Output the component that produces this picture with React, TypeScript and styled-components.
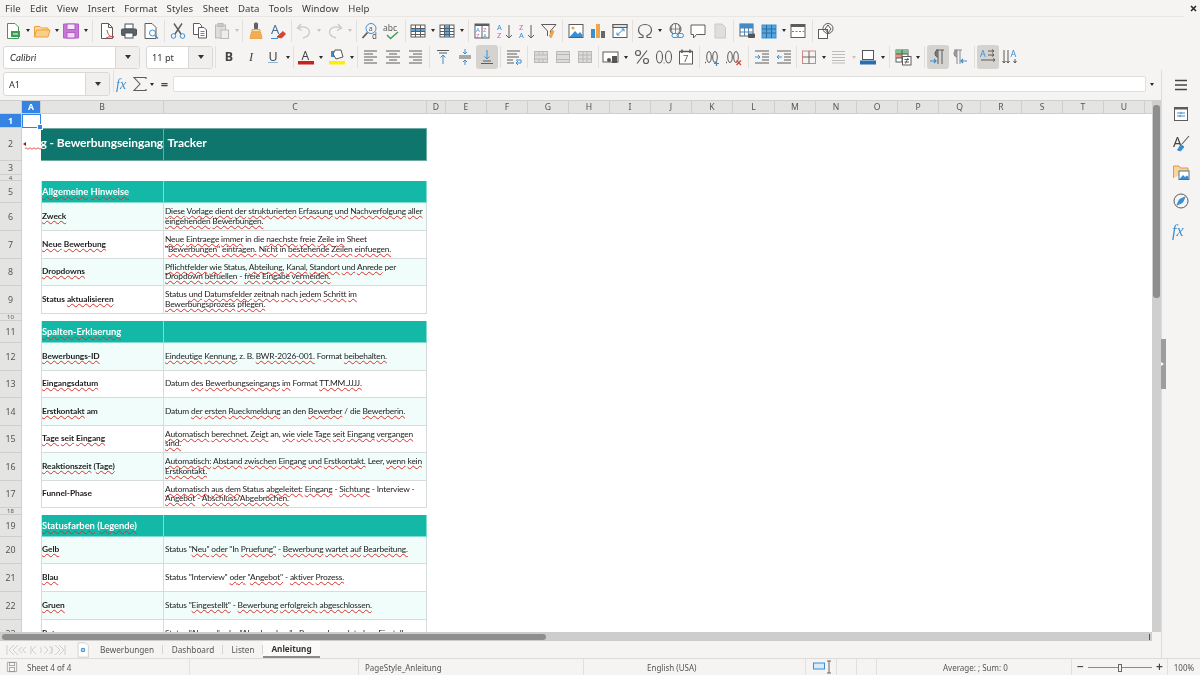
import React from "react";
import styled, { createGlobalStyle } from "styled-components";

const Global = createGlobalStyle`
  html, body { margin: 0; padding: 0; background: #f5f4f2; }
  #root { width: 1200px; height: 675px; overflow: hidden; }
`;

const Page = styled.div`
  width: 1200px; height: 675px; display: flex; flex-direction: column; overflow: hidden;
  background: #f5f4f2; color: #3a3a3a; font-family: "Noto Sans", sans-serif; font-size: 9.6px;
  filter: blur(.3px);
`;
const TopRow = styled.div`height: 17px; display: flex; flex: none;`;
const MenuBar = styled.div`
  flex: 1; display: flex; align-items: center; padding-left: 5px; gap: 9.3px;
  border-bottom: 1px solid #e9e7e4;
`;
const MenuItem = styled.span`font-size: 9.6px; color: #3c3c3c; letter-spacing: .1px;`;
const CloseBtn = styled.div`width: 16px; flex: none; display: flex; align-items: center; justify-content: center; padding-left: 2px; box-sizing: border-box;`;
const Toolbar = styled.div<{ $h: number; $pad: number }>`
  height: ${p => p.$h}px; display: flex; align-items: center; padding-left: ${p => p.$pad}px; flex: none;
`;
const Btn = styled.div<{ $on?: boolean }>`
  width: 22px; height: 24px; flex: none; display: flex; align-items: center; justify-content: center;
  border-radius: 3px; background: ${p => (p.$on ? "#d5d3d0" : "transparent")};
`;
const DropBox = styled.div<{ $dim?: boolean }>`
  width: 7px; height: 24px; flex: none; display: flex; align-items: center; justify-content: center;
  &::after { content: ""; border-left: 2.5px solid transparent; border-right: 2.5px solid transparent;
    border-top: 3px solid ${p => (p.$dim ? "#c4c4c4" : "#2a2a2a")}; }
`;
const Sep = styled.div<{ $w: number }>`
  width: ${p => p.$w}px; height: 22px; flex: none; display: flex; justify-content: center;
  &::after { content: ""; width: 1px; background: #e2e0dd; }
`;
const Gap = styled.div<{ $w: number }>`width: ${p => p.$w}px; flex: none;`;
const Combo = styled.div<{ $w: number; $h?: number; $ml?: number }>`
  width: ${p => p.$w}px; height: ${p => p.$h ?? 23}px; flex: none; display: flex; box-sizing: border-box;
  margin-left: ${p => p.$ml ?? 0}px; border: 1px solid #dad8d5; border-radius: 3px; background: #fff; overflow: hidden;
`;
const ComboText = styled.div<{ $it?: boolean }>`
  flex: 1; display: flex; align-items: center; padding-left: ${p => (p.$it ? 6 : 5)}px; font-size: ${p => (p.$it ? 9.8 : 9.2)}px; color: #333;
  font-style: ${p => (p.$it ? "italic" : "normal")};
  font-family: ${p => (p.$it ? `"Lato", sans-serif` : `"Noto Sans", sans-serif`)};
`;
const ComboArrow = styled.div`
  width: 23px; flex: none; display: flex; align-items: center; justify-content: center; background: #f0efed;
  border-left: 1px solid #dad8d5;
  &::after { content: ""; border-left: 3.5px solid transparent; border-right: 3.5px solid transparent; border-top: 4px solid #333; }
`;
const Letter = styled.span<{ $kind: "b" | "i" | "u" }>`
  font-family: ${p => (p.$kind === "i" ? `"Liberation Serif", serif` : `"Noto Sans", sans-serif`)};
  font-weight: ${p => (p.$kind === "b" ? 700 : 400)};
  font-style: ${p => (p.$kind === "i" ? "italic" : "normal")};
  font-size: 12.5px; color: #444; line-height: 14px;
  ${p => p.$kind === "u" && "border-bottom: 1.5px solid #8fb7dc; line-height: 11px;"}
`;

const Main = styled.div`flex: 1; display: flex; min-height: 0;`;
const LeftPane = styled.div`width: 1161px; flex: none; display: flex; flex-direction: column; min-width: 0;`;
const SideBar = styled.div`
  flex: 1; border-left: 1px solid #dedcd9; display: flex; flex-direction: column; align-items: center;
  padding-top: 5px; gap: 9px; position: relative;
`;
const SideBtn = styled.div`width: 20px; height: 20px; display: flex; align-items: center; justify-content: center;`;
const SideHandle = styled.div`
  position: absolute; left: -1px; top: 269px; width: 5px; height: 50px; background: #9d9d9d; display: flex; align-items: center;
  &::after { content: ""; border-left: 3px solid #fff; border-top: 2.5px solid transparent; border-bottom: 2.5px solid transparent; }
`;
const FormulaBar = styled.div`height: 30px; display: flex; align-items: flex-start; padding-left: 3px; flex: none;`;
const NameWrap = styled.div`margin-top: 2px; display: flex;`;
const ToolCell = styled.div<{ $w: number }>`
  width: ${p => p.$w}px; height: 28px; flex: none; display: flex; align-items: center; justify-content: center;
`;
const FormulaInput = styled.div`
  margin-top: 6px; height: 16px; flex: none; width: 973px; background: #fff; border: 1px solid #e2e0dd; border-radius: 2px; box-sizing: border-box;
`;
const EqualSign = styled.span`font-size: 13px; color: #444; font-weight: 600;`;
const SheetWrap = styled.div`flex: 1; display: flex; min-height: 0; background: #fff;`;
const GridArea = styled.div`width: 1152px; flex: none; display: flex; flex-direction: column; position: relative;`;
const ColHeader = styled.div`
  height: 14px; display: flex; flex: none; background: #e4e4e3; box-sizing: border-box;
  border-top: 1px solid #cfcfcf; border-bottom: 1px solid #cfcfcf;
`;
const ColCell = styled.div<{ $w: number; $on?: boolean }>`
  width: ${p => p.$w}px; flex: none; box-sizing: border-box; display: flex; align-items: center; justify-content: center;
  font-size: 8.6px; color: ${p => (p.$on ? "#fff" : "#555")}; font-weight: ${p => (p.$on ? 700 : 400)};
  background: ${p => (p.$on ? "#3584e4" : "transparent")}; border-right: 1px solid #cfcfcf;
`;
const Body = styled.div`flex: 1; overflow: hidden; position: relative; background: #fff;`;
const Row = styled.div<{ $h: number }>`
  height: ${p => p.$h}px; display: grid; grid-template-columns: 22px 19px 123px 263px; box-sizing: border-box;
`;
const RowHead = styled.div<{ $on?: boolean; $tiny?: boolean }>`
  display: flex; align-items: center; justify-content: center; box-sizing: border-box; overflow: hidden;
  font-size: ${p => (p.$tiny ? 6 : 8.8)}px; line-height: ${p => (p.$tiny ? 6 : 10)}px; color: ${p => (p.$on ? "#fff" : "#555")}; font-weight: ${p => (p.$on ? 700 : 400)};
  background: ${p => (p.$on ? "#3584e4" : "#e4e4e3")}; border-bottom: 1px solid #cfcfcf; border-right: 1px solid #cfcfcf;
`;
const Cell = styled.div<{ $kind?: "title" | "section" | "tint" | "plain" | "none"; $strong?: boolean; $right?: boolean }>`
  box-sizing: border-box; display: flex; flex-direction: column; justify-content: center; overflow: hidden; padding-left: 1px;
  font-family: "Lato", "Liberation Sans", sans-serif; font-size: 8.4px; line-height: 9.4px; color: #1c1c1c;
  white-space: nowrap; letter-spacing: ${p => (p.$strong ? "-.06px" : "-.18px")};
  font-weight: ${p => (p.$strong ? 700 : 400)};
  ${p => p.$kind === "title" && `background: #0f766e; color: #fff; font-size: 12px; font-weight: 700; line-height: 14px; padding-bottom: 3px; letter-spacing: 0; border: 1px solid #6ea9a3; border-width: 1px 1px 1px 0;`}
  ${p => p.$kind === "section" && `background: #14b8a6; color: #fff; font-size: 9.4px; letter-spacing: -.03px; font-weight: 700; border-right: 1px solid #7fdcd1; border-bottom: 1px solid #7fdcd1;`}
  ${p => p.$kind === "tint" && `background: #f0fdfa; border-right: 1px solid #d6dcdb; border-bottom: 1px solid #d6dcdb;`}
  ${p => p.$kind === "plain" && `background: #fff; border-right: 1px solid #d6dcdb; border-bottom: 1px solid #d6dcdb;`}
  ${p => p.$right && "align-items: flex-end; padding-right: 0; letter-spacing: -.12px;"}
`;
const FirstCell = styled(Cell)`border-left: 1px solid #d6dcdb; padding-left: 0;`;
const Word = styled.span`text-decoration: underline wavy #d8322a 0.7px; text-underline-offset: 0.5px; text-decoration-skip-ink: none;`;
const Line = styled.span`display: block;`;
const Cursor = styled.div`
  position: absolute; left: 22px; top: 0; width: 19px; height: 14px; box-sizing: border-box; border: 1.5px solid #3584e4;
  &::after { content: ""; position: absolute; right: -2.5px; bottom: -2.5px; width: 4px; height: 4px; background: #3584e4; border: .5px solid #fff; }
`;
const OverflowMark = styled.div`
  position: absolute; left: 23px; top: 28px; border-right: 3px solid #a11; border-top: 2.5px solid transparent; border-bottom: 2.5px solid transparent;
`;
const OverflowWave = styled.div`
  position: absolute; left: 25px; top: 33px; width: 16px; height: 3px; overflow: hidden;
`;
const VScroll = styled.div`width: 9px; flex: none; background: #cfcfcf; padding: 5px 1px 0; box-sizing: border-box;`;
const VThumb = styled.div`height: 193px; background: #8e8e8e; border-radius: 3px;`;
const HScroll = styled.div`height: 9px; flex: none; background: #cdcdcd; padding: 2px 0 1px 2px; box-sizing: border-box; width: 1152px; display: flex; justify-content: space-between;`;
const HThumb = styled.div`width: 544px; background: #8e8e8e; border-radius: 3px;`;
const HEnd = styled.div`width: 1px; background: #555; margin-right: 2px;`;
const Tabs = styled.div`height: 17px; flex: none; display: flex; align-items: stretch; padding-left: 6px;`;
const NavIcons = styled.div`width: 60px; flex: none; display: flex; align-items: center;`;
const AddTab = styled.div`
  margin-left: 8px; width: 21px; flex: none; display: flex; align-items: center; padding-left: 1px; box-sizing: border-box;
`;
const TabItem = styled.div<{ $w: number; $on?: boolean; $last?: boolean; $pr?: number }>`
  width: ${p => p.$w}px; flex: none; display: flex; align-items: center; justify-content: center; position: relative; box-sizing: border-box;
  padding-right: ${p => p.$pr ?? 0}px;
  font-size: 8.2px; color: ${p => (p.$on ? "#333" : "#555")}; font-weight: ${p => (p.$on ? 700 : 400)};
  ${p => p.$on && "border-bottom: 2px solid #8b8b8b; background: #fbfaf9;"}
  ${p => !p.$on && !p.$last && "&::after { content: ''; position: absolute; right: 0; top: 4px; bottom: 4px; width: 1px; background: #d5d3d0; }"}
`;
const StatusBar = styled.div`
  height: 17px; flex: none; display: flex; align-items: stretch; border-top: 1px solid #dedcd9; box-sizing: border-box;
  font-size: 8px; color: #555;
`;
const StatusCell = styled.div<{ $w: number; $center?: boolean; $line?: boolean; $pad?: number }>`
  width: ${p => p.$w}px; flex: none; display: flex; align-items: center; box-sizing: border-box; gap: 4px;
  padding-left: ${p => p.$pad ?? 0}px;
  justify-content: ${p => (p.$center ? "center" : "flex-start")};
  ${p => p.$line && "border-right: 1px solid #e2e0dd;"}
`;
const ZoomTrack = styled.div`
  width: 64px; height: 1px; background: #8a8a8a; position: relative; flex: none;
  &::after { content: ""; position: absolute; left: 30px; top: -3px; width: 2px; height: 6px; background: #f5f4f2; border: 1px solid #666; }
`;
const ZoomSign = styled.span`font-size: 12px; color: #444; font-weight: 600; line-height: 10px;`;

const blue = "#3a8fd3", gray = "#5c5c5c", org = "#eda64a", red = "#d8402f", grn = "#3e9b57";
type P = React.SVGProps<SVGSVGElement>;
const Sv = styled.svg`display: block; flex: none; overflow: visible;`;
const G = ({ c, children, s = 18, ...r }: P & { c?: string; s?: number }) => (
  <Sv width={s} height={s} viewBox="0 0 18 18" fill="none" stroke={c ?? gray} strokeWidth={1} {...r}>{children}</Sv>
);
const T = (p: { x: number; y: number; f?: string; z?: number; children: string; b?: boolean }) => (
  <text x={p.x} y={p.y} fill={p.f ?? gray} stroke="none" fontSize={p.z ?? 8} fontWeight={p.b ? 700 : 400} fontFamily="Noto Sans, sans-serif">{p.children}</text>
);
const lines = (ys: [number, number, number][], c = gray) => ys.map(([y, a, b], i) => <path key={i} d={`M${a} ${y}H${b}`} stroke={c} />);
const tableG = (c: string, hi: React.ReactNode) => (
  <G c={c}><rect x="2" y="3" width="14" height="12" fill="#fff" />{hi}<path d="M2 6.5H16M2 9.5H16M2 12.5H16M6.5 3V15M11.5 3V15" /></G>
);
const grayTable = (inner: React.ReactNode) => <G c="#b8b8b6"><rect x="2.5" y="3.5" width="13" height="11" fill="#dddcda" />{inner}</G>;

const icons: Record<string, React.ReactNode> = {
  close: <Sv width="7" height="7" viewBox="0 0 7 7" fill="none" stroke="#2a2a2a" strokeWidth={1.6}><path d="M1 1L6 6M6 1L1 6" /></Sv>,
  new: <G c={grn}><path d="M3.5 1.5H11L14.5 5V16.5H3.5Z" fill="#fff" /><rect x="7" y="9" width="9" height="6" fill={grn} stroke="none" /><path d="M9 12H14" stroke="#fff" /></G>,
  open: <G c="#e8a13c"><path d="M1.5 15V4.5H7L8.5 6H15V8" fill="#fbd9a0" /><path d="M1.5 15L3.5 8H17L15 15Z" fill="#fbcf87" /></G>,
  save: <G c="#b45fc6"><path d="M1.5 2H16.5V16H1.5Z" fill="#c778d6" /><rect x="5" y="2" width="8" height="5.5" fill="#f7e8fa" /><rect x="5" y="10.5" width="8" height="5.5" fill="#f0d8f5" /></G>,
  pdf: <G c={gray}><path d="M3.5 1.5H10.5L14.5 5.5V16.5H3.5Z" fill="#fff" /><path d="M10.5 1.5V5.5H14.5" /><path d="M9 8C10 13 12 15 16 15C12 14 9 15 7 17" stroke={red} /></G>,
  print: <G c="#4d5358"><rect x="5" y="2" width="8" height="5" fill="#fff" /><rect x="1.5" y="7" width="15" height="6.5" rx="1" fill="#59626a" /><rect x="5" y="11" width="8" height="5" fill="#fff" /></G>,
  preview: <G c={gray}><path d="M3 1.5H10L14 5.5V16.5H3Z" fill="#fff" /><circle cx="10.5" cy="11" r="3" stroke={blue} /><path d="M13 13.5L16 16.5" stroke={blue} strokeWidth={1.5} /></G>,
  cut: <G c={gray}><path d="M5 1.5L12 12M13 1.5L6 12" strokeWidth={1.4} /><circle cx="4.5" cy="14" r="2.3" stroke={blue} /><circle cx="13.5" cy="14" r="2.3" stroke={blue} /></G>,
  copy: <G c={gray}><path d="M2.5 1.5H8.5L10.5 3.5V12.5H2.5Z" fill="#fff" /><path d="M7.5 5.5H13L15.5 8V16H7.5Z" fill="#fff" /><path d="M9.5 9.5H13.5M9.5 11.5H13.5M9.5 13.5H13.5" stroke={blue} /></G>,
  paste: <G c="#b9b9b9"><rect x="2.5" y="3" width="10" height="13" fill="#dcdcda" /><rect x="5" y="1.5" width="5" height="3" fill="#c9c9c9" /><rect x="8" y="8" width="7.5" height="8.5" fill="#eee" /></G>,
  clone: <G c="#5a5a5a"><rect x="7.5" y="1" width="3" height="6" rx="1" fill="#666" /><path d="M5 7.5H13V10H5Z" fill="#f6d9a4" stroke={org} /><path d="M4.5 10H13.5L15 16.5H3Z" fill="#f2ae55" stroke={org} /></G>,
  clear: <G c="#3a6f9f"><T x={2} y={12} z={13} f="#456f93">A</T><path d="M8 15L14 9.5L16.5 12L12.5 16Z" fill={red} stroke={red} /><path d="M2 16.5H9" stroke={blue} /></G>,
  undo: <G c="#c8c8c6" strokeWidth={1.3}><path d="M6 2L2.5 6L7 8.5" /><path d="M3 6C10 3 16 7 14 12C13 14 10 15.5 8 16" /></G>,
  redo: <G c="#c8c8c6" strokeWidth={1.3}><path d="M12 2L15.5 6L11 8.5" /><path d="M15 6C8 3 2 7 4 12C5 14 8 15.5 10 16" /></G>,
  find: <G c={gray}><circle cx="10" cy="6.5" r="5" stroke={blue} /><T x={7.7} y={9} z={7} f={gray}>a</T><path d="M6.5 10.5L1.5 16" strokeWidth={1.8} /><T x={11} y={17} z={8}>d</T></G>,
  spell: <G c={grn}><T x={0} y={9} z={8.5}>abc</T><path d="M4 13L7.5 16.5L15 10" strokeWidth={1.4} /></G>,
  rows: tableG(gray, <rect x="2" y="6.5" width="14" height="3" fill="#58a7e4" stroke="none" />),
  cols: tableG(gray, <rect x="6.5" y="3" width="5" height="12" fill="#58a7e4" stroke="none" />),
  sort: <G c={gray}><rect x="2" y="2" width="14" height="14" fill="#fff" /><path d="M2 3H16" strokeWidth={2} /><path d="M9 4V16" /><T x={3} y={10} z={6} f={blue}>A</T><T x={3} y={16} z={6} f="#c264c9">Z</T><T x={10} y={10} z={6} f="#c264c9">Z</T><T x={10} y={16} z={6} f={blue}>A</T></G>,
  asc: <G c={gray}><T x={1} y={8} z={7.5} f={blue}>A</T><T x={1} y={16} z={7.5} f="#c264c9">Z</T><path d="M13 3V16M10 13L13 16L16 13" /></G>,
  desc: <G c={gray}><T x={1} y={8} z={7.5} f="#c264c9">Z</T><T x={1} y={16} z={7.5} f={blue}>A</T><path d="M13 3V16M10 13L13 16L16 13" /></G>,
  filter: <G c={gray}><path d="M1.5 2.5H16L10.5 9V12" /><path d="M1.5 2.5L7.5 9V14" /><path d="M12 8L14 9.5L11 16L9.5 14Z" fill={org} stroke={org} /></G>,
  image: <G c={gray}><rect x="2" y="2.5" width="14" height="13" fill="#fff" /><circle cx="6" cy="6" r="1.6" fill={org} stroke="none" /><path d="M2.5 15L8 9L11 12L13 10L15.5 13V15Z" fill={blue} stroke="none" /></G>,
  chart: <G c="none"><rect x="2" y="7" width="4" height="9" fill={blue} /><rect x="7" y="2" width="4" height="14" fill={org} /><rect x="12" y="9" width="4" height="7" fill="#666" /></G>,
  pivot: <G c={gray}><rect x="2" y="2.5" width="14" height="13" fill="#fff" /><rect x="2" y="2.5" width="14" height="3" fill="#ddd" /><path d="M6 13L13 7M10.5 7H13V9.5M6 10.5V13H8.5" stroke={blue} /></G>,
  omega: <G c={gray} strokeWidth={1.2}><path d="M2.5 15.5H7V13.5C4.5 12.5 2.5 10.5 2.5 8C2.5 4.5 5.5 2.5 9 2.5S15.5 4.5 15.5 8C15.5 10.5 13.5 12.5 11 13.5V15.5H15.5" /></G>,
  link: <G c={gray}><circle cx="8.5" cy="7" r="5.5" /><path d="M3 7H14M8.5 1.5V12.5M5.5 2.5C4 6 4 8 5.5 11.5M11.5 2.5C13 6 13 8 11.5 11.5" strokeWidth={.7} /><rect x="5" y="11.5" width="6.5" height="4" rx="2" fill="#fff" stroke={blue} /><rect x="10" y="11.5" width="6.5" height="4" rx="2" fill="none" stroke={blue} /></G>,
  comment: <G c={gray}><path d="M2 3H16V12.5H7.5L4.5 16V12.5H2Z" fill="#fff" /></G>,
  note: <G c="#c9c9c7"><path d="M4 2H11L14.5 5.5V16H4Z" fill="#dededc" /></G>,
  head: <G c={gray}><rect x="2" y="2" width="13" height="12" fill="#fff" /><rect x="2" y="2" width="13" height="4" fill={blue} stroke="none" /><path d="M2 6H15M2 10H15M6.5 2V14M10.5 2V14" stroke="#4f86b5" /><rect x="10" y="11.5" width="7" height="4.5" rx="1" fill="#555" stroke="none" /></G>,
  freeze: <G c={blue}><rect x="2" y="3" width="14" height="13" fill="#56a5e2" /><path d="M2 7H16M2 11H16M6.5 3V16M11.5 3V16" stroke="#2a6ea3" /></G>,
  split: <G c={gray}><rect x="2" y="2.5" width="14" height="13" fill="#fff" /><path d="M2 4H16" strokeWidth={2} /><path d="M3 9.5H15" stroke={blue} strokeDasharray="2 1.5" /></G>,
  shapes: <G c={gray}><rect x="1.5" y="7.5" width="9" height="9" fill="#fff" /><circle cx="11" cy="6.5" r="5" fill="none" /><path d="M11 3L14 7L11 11L8 7Z" /></G>,
  alL: <G>{lines([[3, 2, 15], [6, 2, 11], [9, 2, 15], [12, 2, 11], [15, 2, 15]])}</G>,
  alC: <G>{lines([[3, 2, 16], [6, 5, 13], [9, 2, 16], [12, 5, 13], [15, 2, 16]])}</G>,
  alR: <G>{lines([[3, 3, 16], [6, 7, 16], [9, 3, 16], [12, 7, 16], [15, 3, 16]])}</G>,
  top: <G>{lines([[2.5, 3, 15], [5, 5, 13]])}<path d="M9 16V7M6.5 9.5L9 7L11.5 9.5" stroke={blue} /></G>,
  mid: <G>{lines([[8, 3, 15], [10, 3, 15]])}<path d="M9 1V6M7 4L9 6L11 4M9 17V12M7 14L9 12L11 14" stroke={blue} /></G>,
  bot: <G>{lines([[15.5, 3, 15], [13, 5, 13]])}<path d="M9 2V11M6.5 8.5L9 11L11.5 8.5" stroke={blue} /></G>,
  wrap: <G>{lines([[3, 2, 15], [6, 2, 12], [9, 2, 14], [12, 2, 8], [15, 2, 9]])}<path d="M11 12H16V15H11M13 13L11 15L13 17" stroke={blue} /></G>,
  m1: grayTable(<path d="M2.5 7H15.5M2.5 11H15.5M7 3.5V7M11 3.5V7M7 11V14.5M11 11V14.5" />),
  m2: grayTable(<path d="M2.5 6.5H15.5M2.5 11.5H15.5" />),
  m3: grayTable(<path d="M2.5 7H15.5M2.5 11H15.5M7 3.5V14.5M11 3.5V14.5" />),
  cur: <G><rect x="1" y="4" width="15" height="10" fill="#fff" /><circle cx="7" cy="12" r="2" fill="#555" stroke="none" /><rect x="10" y="8" width="5" height="7" fill="#555" stroke="none" /></G>,
  pct: <G strokeWidth={1.2}><circle cx="5" cy="5" r="2.5" /><circle cx="13" cy="13" r="2.5" /><path d="M14 2.5L4 15.5" /></G>,
  num: <G strokeWidth={1.1}><ellipse cx="4.5" cy="9" rx="3" ry="6" /><ellipse cx="13.5" cy="9" rx="3" ry="6" /><path d="M8.7 15H9.5" /></G>,
  date: <G><rect x="2.5" y="3.5" width="13" height="12.5" fill="#fff" /><path d="M2.5 3.5H15.5M5 1.5V5M13 1.5V5" strokeWidth={1.5} /><T x={6} y={14} z={9.5}>7</T></G>,
  addd: <G><path d="M2 14.5H3" strokeWidth={1.4} /><ellipse cx="6" cy="9" rx="2.3" ry="5.5" /><ellipse cx="12" cy="9" rx="2.3" ry="5.5" /><path d="M13.5 13V18M11 15.5H16" stroke={blue} strokeWidth={1.2} /></G>,
  rmd: <G><path d="M1 14.5H2" strokeWidth={1.4} /><ellipse cx="5" cy="9" rx="2.3" ry="5.5" /><ellipse cx="11" cy="9" rx="2.3" ry="5.5" /><path d="M11.5 12.5L16 17M16 12.5L11.5 17" stroke={red} strokeWidth={1.2} /></G>,
  ind: <G>{lines([[3, 2, 16], [6, 9, 16], [9, 9, 16], [12, 9, 16], [15, 2, 16]])}<path d="M2 9H7M5 7L7 9L5 11" stroke={blue} /></G>,
  outd: <G>{lines([[3, 2, 16], [6, 9, 16], [9, 9, 16], [12, 9, 16], [15, 2, 16]])}<path d="M7 9H2M4 7L2 9L4 11" stroke={blue} /></G>,
  bord: <G c="#666"><rect x="2.5" y="3" width="13" height="12.5" stroke="#c88" /><path d="M9 3V15.5M2.5 9H15.5" /></G>,
  bstyle: <G c="#bcbcba">{lines([[3.5, 2, 15], [6.5, 2, 15], [9.5, 2, 15], [12.5, 2, 15], [15, 2, 15]], "#bcbcba")}</G>,
  bcol: <G c="#2f6ca6"><rect x="3.5" y="2.5" width="11" height="9" fill="#fff" stroke="#555" /><rect x="1" y="12.5" width="16" height="4" fill="#2a6db0" stroke="none" /></G>,
  cond: <G c={gray}><rect x="2" y="2" width="12" height="12" fill="#fff" /><rect x="2" y="2" width="12" height="4" fill="#7fc08f" stroke="none" /><rect x="2" y="6" width="6" height="4" fill="#eb8f80" stroke="none" /><path d="M2 6H14M2 10H14M8 2V14" /><rect x="8.5" y="8.5" width="8.5" height="8.5" fill="#fff" /><path d="M10.5 11.5H15M10.5 14H15M14 10L11.5 15.5" /></G>,
  ltr: <G c={gray}><path d="M9 2V16M13 2V16M7 2H15" /><path d="M9 2C5 2 5 9 9 9" fill="#777" /><path d="M1 13H7M5 11L7 13L5 15" stroke={blue} strokeWidth={1.2} /></G>,
  rtl: <G c="#888"><path d="M6 2V16M9 2V16M3 2H11" /><path d="M6 2C2 2 2 9 6 9" fill="#999" /><path d="M16 13H10M12 11L10 13L12 15" stroke={blue} strokeWidth={1.2} /></G>,
  horiz: <G c={gray}><T x={1} y={9} z={9} f={blue}>A</T><path d="M9 3H15M13 1.5L15 3L13 4.5M9 7H15M13 5.5L15 7L13 8.5" stroke={gray} /><path d="M2 12H16M14 10.5L16 12L14 13.5" /></G>,
  vert: <G c={gray}><path d="M3 2V15M1.5 13L3 15L4.5 13M7 2V15M5.5 13L7 15L8.5 13M14 11V15M12.5 13L14 15L15.5 13" /><T x={9.5} y={9} z={9} f={blue}>A</T></G>,
  fx: <G c={blue}><text x="1" y="14" fill={blue} stroke="none" fontSize="14" fontStyle="italic" fontFamily="Liberation Serif, serif">fx</text></G>,
  sigma: <G strokeWidth={1.1}><path d="M15 4V2.5H3L9 9L3 15.5H15V14" /></G>,
  burger: <G c="#444" strokeWidth={1.4}><path d="M3 4.5H15M3 9H15M3 13.5H15" /></G>,
  props: <G><rect x="2.5" y="2.5" width="13" height="13" fill="#fff" /><path d="M2.5 3.5H15.5" strokeWidth={2} /><path d="M5 8H13M5 11H13" stroke={blue} /><path d="M9 6.8V9.2M8 9.8V12.2" stroke={blue} /></G>,
  styles: <G><T x={1} y={13} z={14} f="#444">A</T><path d="M17 2L10 10" strokeWidth={1.1} /><path d="M9 10.5L12 13L8.5 17L5.5 16Z" fill={blue} stroke={blue} /></G>,
  gallery: <G c="#e39a3b"><path d="M1.5 15V3H7L8.5 5H16V8" fill="#fbd49a" /><rect x="7" y="8" width="10" height="8.5" fill="#fff" stroke="#47729a" /><path d="M7.5 16L11 12L13 14L15 12.5L16.5 14V16Z" fill={blue} stroke="none" /></G>,
  nav: <G><circle cx="9" cy="9" r="7" /><path d="M13 5L10.5 10.5L5 13L7.5 7.5Z" fill={blue} stroke={blue} /></G>,
  sidefx: <G c={blue}><text x="0" y="15" fill={blue} stroke="none" fontSize="16" fontStyle="italic" fontFamily="Liberation Serif, serif">fx</text></G>,
  saveSmall: <G c="#8b8b8b" s={12}><path d="M2 2H16V16H2Z" /><rect x="5" y="2" width="8" height="5" /><rect x="5" y="10" width="8" height="6" /></G>,
  addTab: <G s={16} c="#ccc"><path d="M3.5 1H12L15 4V17H3.5Z" fill="#fff" /><circle cx="9" cy="9" r="2.5" fill={blue} stroke="none" /><path d="M9 7.5V10.5M7.5 9H10.5" stroke="#fff" strokeWidth={.8} /></G>,
  selMode: <Sv width="22" height="14" viewBox="0 0 22 14" fill="none"><rect x=".5" y="3" width="11" height="6" fill="#d9ebf8" stroke={blue} /><path d="M14 1H18M16 1V13M14 13H18" stroke="#666" /></Sv>,
  nav1: <Sv width="60" height="12" viewBox="0 0 60 12" fill="none" stroke="#cfcfcd"><path d="M1 1V11M8 1L3 6L8 11M12 1L7 6L12 11" /><path d="M16 3L12.5 6L16 9M20 3L16.5 6L20 9M25 2V10M30 2L26 6L30 10M35 3V9M38 2L42 6L38 10M46 2V10M43 2L47 6L43 10" /><path d="M49 1L54 6L49 11M53 1L58 6L53 11M59 1V11" /></Sv>,
};
const Ic = ({ n, on }: { n: string; on?: boolean }) => <Btn $on={on}>{icons[n]}</Btn>;
const Drop = DropBox;

const WaveSvg = () => (
  <Sv width="16" height="3" viewBox="0 0 16 3" fill="none" stroke="#d8322a" strokeWidth=".8"><path d="M0 1.5Q1 0 2 1.5T4 1.5T6 1.5T8 1.5T10 1.5T12 1.5T14 1.5T16 1.5" /></Sv>
);

const Token = ({ w }: { w: string }) => {
  const at = w.indexOf("~");
  if (at < 0) return <>{w}</>;
  return <>{w.slice(0, at)}<Word>{w.slice(at + 1)}</Word></>;
};
const Txt = ({ t }: { t: string }) => (
  <>
    {t.split("|").map((ln, i) => (
      <Line key={i}>
        {ln.split(" ").map((w, j) => (
          <React.Fragment key={j}>
            {j > 0 && " "}
            <Token w={w} />
          </React.Fragment>
        ))}
      </Line>
    ))}
  </>
);

const colW: [string, number][] = [["A", 19], ["B", 123], ["C", 263], ["D", 19], ["E", 41], ["F", 41], ["G", 41], ["H", 41], ["I", 41], ["J", 41], ["K", 41], ["L", 42], ["M", 41], ["N", 41], ["O", 41], ["P", 41], ["Q", 42], ["R", 41], ["S", 41], ["T", 41], ["U", 41]];

type R = { n: number; h: number; kind?: "title" | "section" | "data"; a?: string; b?: string; tiny?: boolean };
const rows: R[] = [
  { n: 1, h: 14 },
  { n: 2, h: 33, kind: "title" },
  { n: 3, h: 14 },
  { n: 4, h: 6, tiny: true },
  { n: 5, h: 22, kind: "section", a: "~Allgemeine ~Hinweise" },
  { n: 6, h: 28, kind: "data", a: "~Zweck", b: "~Diese ~Vorlage ~dient ~der ~strukturierten ~Erfassung ~und ~Nachverfolgung ~aller|~eingehenden ~Bewerbungen." },
  { n: 7, h: 28, kind: "data", a: "~Neue ~Bewerbung", b: "~Neue ~Eintraege ~immer in die ~naechste ~freie ~Zeile ~im Sheet|\"~Bewerbungen\" ~eintragen. ~Nicht in ~bestehende ~Zeilen ~einfuegen." },
  { n: 8, h: 27, kind: "data", a: "~Dropdowns", b: "~Pflichtfelder ~wie Status, ~Abteilung, ~Kanal, ~Standort ~und ~Anrede per|~Dropdown ~befuellen - ~freie ~Eingabe ~vermeiden." },
  { n: 9, h: 28, kind: "data", a: "Status ~aktualisieren", b: "Status ~und ~Datumsfelder ~zeitnah ~nach ~jedem ~Schritt ~im|~Bewerbungsprozess ~pflegen." },
  { n: 10, h: 7, tiny: true },
  { n: 11, h: 22, kind: "section", a: "~Spalten-Erklaerung" },
  { n: 12, h: 28, kind: "data", a: "~Bewerbungs-ID", b: "~Eindeutige ~Kennung, z. B. ~BWR-2026-001. Format ~beibehalten." },
  { n: 13, h: 27, kind: "data", a: "~Eingangsdatum", b: "Datum ~des ~Bewerbungseingangs ~im Format ~TT.MM.JJJJ." },
  { n: 14, h: 28, kind: "data", a: "~Erstkontakt am", b: "Datum ~der ~ersten ~Rueckmeldung an den ~Bewerber / die ~Bewerberin." },
  { n: 15, h: 27, kind: "data", a: "~Tage ~seit ~Eingang", b: "~Automatisch ~berechnet. ~Zeigt an, ~wie ~viele ~Tage ~seit ~Eingang ~vergangen|~sind." },
  { n: 16, h: 28, kind: "data", a: "~Reaktionszeit (~Tage)", b: "~Automatisch: ~Abstand ~zwischen ~Eingang ~und ~Erstkontakt. Leer, ~wenn ~kein|~Erstkontakt." },
  { n: 17, h: 27, kind: "data", a: "Funnel-Phase", b: "~Automatisch ~aus ~dem Status ~abgeleitet: ~Eingang - ~Sichtung - Interview -|~Angebot - ~Abschluss/Abgebrochen." },
  { n: 18, h: 7, tiny: true },
  { n: 19, h: 22, kind: "section", a: "~Statusfarben (~Legende)" },
  { n: 20, h: 27, kind: "data", a: "~Gelb", b: "Status \"~Neu\" ~oder \"In ~Pruefung\" - ~Bewerbung ~wartet ~auf ~Bearbeitung." },
  { n: 21, h: 28, kind: "data", a: "~Blau", b: "Status \"Interview\" ~oder \"~Angebot\" - ~aktiver ~Prozess." },
  { n: 22, h: 28, kind: "data", a: "~Gruen", b: "Status \"~Eingestellt\" - ~Bewerbung ~erfolgreich ~abgeschlossen." },
  { n: 23, h: 28, kind: "data", a: "~Rot", b: "Status \"~Absage\" ~oder \"~Abgebrochen\" - ~Prozess ~beendet ~ohne ~Einstellung." },
];

const SheetRow = ({ r }: { r: R }) => {
  const tint = r.kind === "data" && [6, 8, 12, 14, 16, 20, 22].includes(r.n);
  const k = tint ? "tint" : "plain";
  return (
    <Row $h={r.h}>
      <RowHead $on={r.n === 1} $tiny={r.tiny}>{r.n}</RowHead>
      <Cell />
      {r.kind === "title" && <><Cell $kind="title" $right>g - Bewerbungseingang</Cell><Cell $kind="title"><Line>&nbsp;Tracker</Line></Cell></>}
      {r.kind === "section" && <><FirstCell $kind="section"><Txt t={r.a ?? ""} /></FirstCell><Cell $kind="section" /></>}
      {r.kind === "data" && <><FirstCell $kind={k} $strong><Txt t={r.a ?? ""} /></FirstCell><Cell $kind={k}><Txt t={r.b ?? ""} /></Cell></>}
    </Row>
  );
};

export default function App() {
  return (
    <Page>
      <Global />
      <TopRow>
        <MenuBar>
          {["File", "Edit", "View", "Insert", "Format", "Styles", "Sheet", "Data", "Tools", "Window", "Help"].map(m => <MenuItem key={m}>{m}</MenuItem>)}
        </MenuBar>
        <CloseBtn>{icons.close}</CloseBtn>
      </TopRow>
      <Toolbar $h={27} $pad={2}>
        <Ic n="new" /><Drop /><Ic n="open" /><Drop /><Ic n="save" /><Drop /><Sep $w={7} />
        <Ic n="pdf" /><Ic n="print" /><Ic n="preview" /><Sep $w={5} />
        <Ic n="cut" /><Ic n="copy" /><Ic n="paste" /><Drop $dim /><Sep $w={5} />
        <Ic n="clone" /><Ic n="clear" /><Sep $w={4} />
        <Ic n="undo" /><Drop $dim /><Gap $w={2} /><Ic n="redo" /><Drop $dim /><Sep $w={6} />
        <Ic n="find" /><Ic n="spell" /><Sep $w={4} />
        <Ic n="rows" /><Drop /><Ic n="cols" /><Drop /><Sep $w={6} />
        <Ic n="sort" /><Gap $w={1} /><Ic n="asc" /><Ic n="desc" /><Ic n="filter" /><Sep $w={5} />
        <Ic n="image" /><Ic n="chart" /><Ic n="pivot" /><Sep $w={3} />
        <Ic n="omega" /><Drop /><Gap $w={2} /><Ic n="link" /><Ic n="comment" /><Ic n="note" /><Sep $w={5} />
        <Ic n="head" /><Ic n="freeze" /><Drop /><Ic n="split" /><Sep $w={6} />
        <Ic n="shapes" />
      </Toolbar>
      <Toolbar $h={26} $pad={3}>
        <Combo $w={137}><ComboText $it>Calibri</ComboText><ComboArrow /></Combo>
        <Combo $w={67} $ml={6}><ComboText>11 pt</ComboText><ComboArrow /></Combo>
        <Sep $w={5} />
        <Btn><Letter $kind="b">B</Letter></Btn><Btn><Letter $kind="i">I</Letter></Btn><Btn><Letter $kind="u">U</Letter></Btn><Drop /><Sep $w={4} />
        <Btn>
          <G><text x="4.5" y="12" fill="#444" stroke="none" fontSize="12" fontFamily="Noto Sans, sans-serif">A</text><rect x="1" y="13" width="16" height="3.5" fill="#c9211e" stroke="none" /></G>
        </Btn>
        <Drop /><Gap $w={2} />
        <Btn>
          <G c="#555"><path d="M3 3H7V9H3Z" fill={blue} stroke="none" /><path d="M7 2L13 2L15 9L8 11L5 6Z" fill="#fff" /><rect x="1" y="13" width="16" height="3.5" fill="#ffee00" stroke="none" /></G>
        </Btn>
        <Drop /><Sep $w={5} />
        <Ic n="alL" /><Ic n="alC" /><Ic n="alR" /><Sep $w={6} />
        <Ic n="top" /><Ic n="mid" /><Ic n="bot" on /><Sep $w={5} />
        <Ic n="wrap" /><Sep $w={5} />
        <Ic n="m1" /><Ic n="m2" /><Ic n="m3" /><Sep $w={4} />
        <Ic n="cur" /><Drop /><Gap $w={2} /><Ic n="pct" /><Ic n="num" /><Ic n="date" /><Sep $w={4} />
        <Ic n="addd" /><Ic n="rmd" /><Sep $w={6} />
        <Ic n="ind" /><Ic n="outd" /><Sep $w={3} />
        <Ic n="bord" /><Drop /><Gap $w={1} /><Ic n="bstyle" /><Drop $dim /><Ic n="bcol" /><Drop /><Sep $w={6} />
        <Ic n="cond" /><Drop /><Sep $w={6} />
        <Ic n="ltr" on /><Ic n="rtl" /><Sep $w={6} />
        <Ic n="horiz" on /><Ic n="vert" />
      </Toolbar>
      <Main>
        <LeftPane>
          <FormulaBar>
            <NameWrap>
              <Combo $w={107} $h={24}><ComboText>A1</ComboText><ComboArrow /></Combo>
            </NameWrap>
            <Sep $w={6} />
            <ToolCell $w={16}>{icons.fx}</ToolCell>
            <ToolCell $w={16}>{icons.sigma}</ToolCell>
            <ToolCell $w={8}><DropBox /></ToolCell>
            <ToolCell $w={17}><EqualSign>=</EqualSign></ToolCell>
            <FormulaInput />
            <ToolCell $w={12}><DropBox /></ToolCell>
          </FormulaBar>
          <SheetWrap>
            <GridArea>
              <ColHeader>
                <ColCell $w={22} />
                {colW.map(([c, w]) => <ColCell key={c} $w={w} $on={c === "A"}>{c}</ColCell>)}
              </ColHeader>
              <Body>
                {rows.map(r => <SheetRow key={r.n} r={r} />)}
                <Cursor />
                <OverflowMark />
                <OverflowWave><WaveSvg /></OverflowWave>
              </Body>
            </GridArea>
            <VScroll><VThumb /></VScroll>
          </SheetWrap>
          <HScroll><HThumb /><HEnd /></HScroll>
          <Tabs>
            <NavIcons>{icons.nav1}</NavIcons>
            <AddTab>{icons.addTab}</AddTab>
            <TabItem $w={68} $pr={4}>Bewerbungen</TabItem>
            <TabItem $w={60}>Dashboard</TabItem>
            <TabItem $w={40}>Listen</TabItem>
            <TabItem $w={57} $on>Anleitung</TabItem>
          </Tabs>
        </LeftPane>
        <SideBar>
          <SideHandle />
          <SideBtn>{icons.burger}</SideBtn>
          <SideBtn>{icons.props}</SideBtn>
          <SideBtn>{icons.styles}</SideBtn>
          <SideBtn>{icons.gallery}</SideBtn>
          <SideBtn>{icons.nav}</SideBtn>
          <SideBtn>{icons.sidefx}</SideBtn>
        </SideBar>
      </Main>
      <StatusBar>
        <StatusCell $w={22} $pad={6}>{icons.saveSmall}</StatusCell>
        <StatusCell $w={168} $line $pad={5}>Sheet 4 of 4</StatusCell>
        <StatusCell $w={169} $line />
        <StatusCell $w={225} $pad={6} $line>PageStyle_Anleitung</StatusCell>
        <StatusCell $w={222} $pad={63} $line>English (USA)</StatusCell>
        <StatusCell $w={31} $pad={7} $line>{icons.selMode}</StatusCell>
        <StatusCell $w={20} $line />
        <StatusCell $w={20} $line />
        <StatusCell $w={195} $pad={66} $line>Average: ; Sum: 0</StatusCell>
        <StatusCell $w={96} $pad={5} $line><ZoomSign>−</ZoomSign><ZoomTrack /><ZoomSign>+</ZoomSign></StatusCell>
        <StatusCell $w={32} $center>100%</StatusCell>
      </StatusBar>
    </Page>
  );
}
